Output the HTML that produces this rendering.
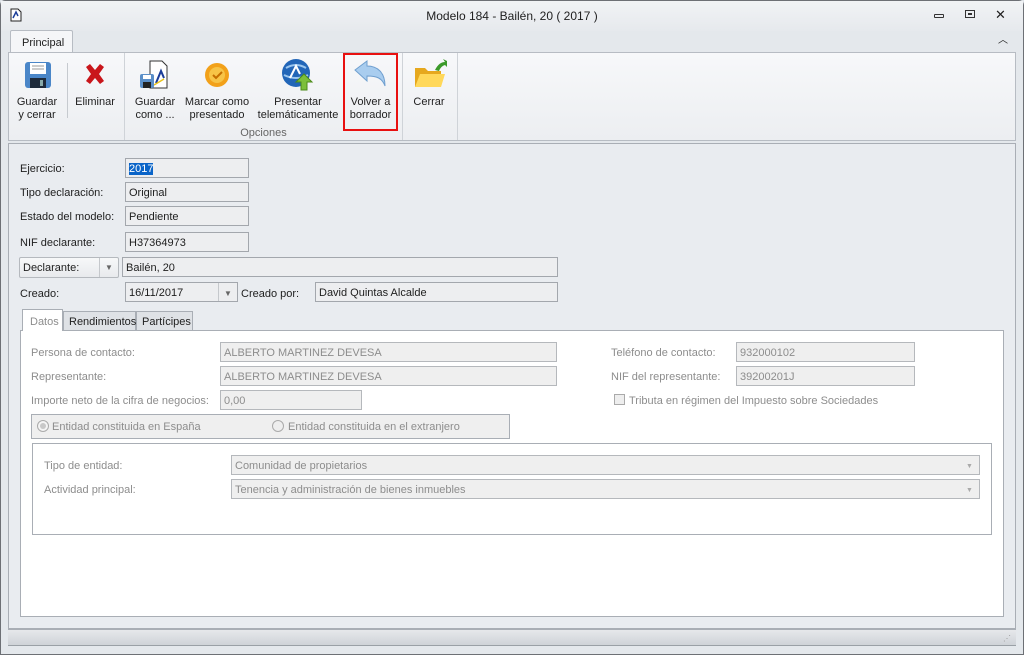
<!DOCTYPE html>
<html><head><meta charset="utf-8"><style>
*{box-sizing:border-box;margin:0;padding:0}
body{width:1024px;height:655px;background:#dfe3e8;font-family:"Liberation Sans",sans-serif;font-size:11px;color:#1e1e1e;position:relative;overflow:hidden}
.a{position:absolute}
.in{position:absolute;border:1px solid #a3a7ad;background:#edeef0;height:20px;padding:3px 3px 0;line-height:14px;white-space:nowrap}
.lb{position:absolute;line-height:14px;white-space:nowrap}
.g{color:#8d8d8d}
.dis{position:absolute;border:1px solid #b5b8bc;background:#efefef;height:20px;padding:3px 3px 0;line-height:14px;color:#8d8d8d;white-space:nowrap}
.btn{position:absolute;text-align:center;line-height:13px;color:#222}
.sep{position:absolute;width:1px;background:#cfd3d8}
</style></head><body>
<div class="a" style="left:0;top:0;width:1024px;height:655px;border:1px solid #6d7075;border-radius:5px 5px 0 0;background:#e4e8ec"></div>
<div class="a" style="left:1px;top:1px;width:1022px;height:30px;background:linear-gradient(#f1f3f5,#e6e9ed)"></div>
<svg class="a" style="left:10px;top:8px" width="12" height="14"><path d="M1 1h7l3 3v9H1z" fill="#fff" stroke="#222"/><path d="M3 10l3-6 2 4" stroke="#1c3f9a" stroke-width="1.5" fill="none"/></svg>
<div class="lb" style="left:0;width:1024px;top:9px;text-align:center;font-size:12px">Modelo 184 - Bailén, 20 ( 2017 )</div>
<div class="a" style="left:934px;top:14px;width:10px;height:4px;border:1px solid #333;border-radius:1px"></div>
<div class="a" style="left:965px;top:10px;width:10px;height:8px;border:1px solid #333"></div>
<div class="a" style="left:968px;top:13px;width:4px;height:2px;border:1px solid #333"></div>
<div class="lb" style="left:995px;top:8px;font-size:13px">✕</div>
<div class="lb" style="left:998px;top:34px;font-size:10px">︿</div>
<div class="a" style="left:10px;top:30px;width:63px;height:23px;border:1px solid #b7bcc3;border-bottom:none;background:#f5f6f8;border-radius:2px 2px 0 0"></div>
<div class="lb" style="left:22px;top:36px">Principal</div>
<div class="a" style="left:8px;top:52px;width:1008px;height:89px;border:1px solid #b7bcc3;background:linear-gradient(#f7f8fa,#eceef1)"></div>
<div class="sep" style="left:124px;top:53px;height:87px"></div>
<div class="sep" style="left:402px;top:53px;height:87px"></div>
<div class="sep" style="left:457px;top:53px;height:87px"></div>
<div class="sep" style="left:67px;top:63px;height:55px;background:#c6cacf"></div>
<svg class="a" style="left:24px;top:61px" width="28" height="28"><rect x="1" y="1" width="26" height="26" rx="3" fill="#4a86c8"/><rect x="6" y="2" width="16" height="11" fill="#fff"/><path d="M8 5h12M8 8h12" stroke="#999"/><rect x="6" y="17" width="16" height="10" fill="#1d2a3a"/><rect x="16" y="19" width="3" height="6" fill="#8aa"/></svg>
<svg class="a" style="left:83px;top:62px" width="24" height="24"><path d="M3 5l4-3 5 6 5-6 4 3-5 7 5 7-4 3-5-6-5 6-4-3 5-7z" fill="#c9161b"/></svg>
<svg class="a" style="left:138px;top:59px" width="32" height="32"><path d="M12 2h12l5 5v22H12z" fill="#fff" stroke="#333"/><path d="M18 24l5-12 3 7" stroke="#1a3c99" stroke-width="2" fill="none"/><path d="M16 26l10-6" stroke="#e8c21a" stroke-width="1.5"/><rect x="2" y="15" width="14" height="14" rx="2" fill="#5b8fc8"/><rect x="5" y="23" width="8" height="6" fill="#222"/><rect x="5" y="16" width="8" height="4" fill="#fff"/></svg>
<svg class="a" style="left:203px;top:61px" width="28" height="28"><circle cx="14" cy="14" r="12" fill="#f2a11a"/><circle cx="14" cy="14" r="8" fill="#f7c447"/><path d="M10 14l3 3 6-6" stroke="#c56e00" stroke-width="2" fill="none"/></svg>
<svg class="a" style="left:281px;top:58px" width="34" height="34"><circle cx="15" cy="15" r="14" fill="#2266b8"/><path d="M5 10q10-6 20 0M3 17q12 6 24 0" stroke="#9cc7ef" fill="none" stroke-width="2"/><path d="M9 20l6-12 4 8" stroke="#fff" stroke-width="2" fill="none"/><path d="M23 16l8 8h-5v8h-6v-8h-5z" fill="#7cbf3a" stroke="#4c8a1a"/></svg>
<svg class="a" style="left:353px;top:60px" width="34" height="28"><path d="M2 10l12-9v5c10 0 18 6 18 20-3-8-8-10-18-10v5z" fill="#a9cdef" stroke="#6f9fcf"/></svg>
<svg class="a" style="left:413px;top:58px" width="34" height="32"><path d="M2 10h10l3 3h13v16H2z" fill="#e6a81e"/><path d="M2 29l5-13h25l-4 13z" fill="#ffd85a"/><path d="M22 12q4-8 10-8l-2-3 4 2v6l-2-2q-4 1-6 6z" fill="#3b9a2a"/></svg>
<div class="btn" style="left:12px;top:96px;width:50px">Guardar<br>y cerrar</div>
<div class="btn" style="left:72px;top:96px;width:46px">Eliminar</div>
<div class="btn" style="left:130px;top:96px;width:50px">Guardar<br>como ...</div>
<div class="btn" style="left:182px;top:96px;width:70px">Marcar como<br>presentado</div>
<div class="btn" style="left:255px;top:96px;width:86px">Presentar<br>telemáticamente</div>
<div class="a" style="left:343px;top:53px;width:55px;height:78px;border:2px solid #e81010"></div>
<div class="btn" style="left:343px;top:96px;width:55px">Volver a<br>borrador</div>
<div class="btn" style="left:405px;top:96px;width:48px">Cerrar</div>
<div class="lb" style="left:124px;top:126px;width:279px;text-align:center;color:#666">Opciones</div>
<div class="a" style="left:8px;top:143px;width:1008px;height:486px;border:1px solid #a9aeb5;background:#e9ecf0"></div>
<div class="lb" style="left:20px;top:162px">Ejercicio:</div>
<div class="in" style="left:125px;top:158px;width:124px"><span style="background:#0a64c8;color:#fff">2017</span></div>
<div class="lb" style="left:20px;top:186px">Tipo declaración:</div>
<div class="in" style="left:125px;top:182px;width:124px">Original</div>
<div class="lb" style="left:20px;top:210px">Estado del modelo:</div>
<div class="in" style="left:125px;top:206px;width:124px">Pendiente</div>
<div class="lb" style="left:20px;top:236px">NIF declarante:</div>
<div class="in" style="left:125px;top:232px;width:124px">H37364973</div>
<div class="a" style="left:19px;top:257px;width:100px;height:21px;border:1px solid #b5b9be;border-radius:2px;background:linear-gradient(#f7f8f9,#e8eaed)"></div>
<div class="a" style="left:99px;top:258px;width:1px;height:19px;background:#c5c8cc"></div>
<div class="lb" style="left:23px;top:261px">Declarante:</div>
<div class="lb" style="left:105px;top:261px;font-size:8px;color:#666">▼</div>
<div class="in" style="left:122px;top:257px;width:436px">Bailén, 20</div>
<div class="lb" style="left:20px;top:287px">Creado:</div>
<div class="in" style="left:125px;top:282px;width:113px">16/11/2017</div>
<div class="a" style="left:218px;top:283px;width:1px;height:18px;background:#c5c8cc"></div>
<div class="lb" style="left:224px;top:287px;font-size:8px;color:#666">▼</div>
<div class="lb" style="left:241px;top:287px">Creado por:</div>
<div class="in" style="left:315px;top:282px;width:243px">David Quintas Alcalde</div>
<div class="a" style="left:20px;top:330px;width:984px;height:287px;border:1px solid #a9aeb5;background:#fff"></div>
<div class="a" style="left:22px;top:309px;width:41px;height:22px;border:1px solid #a9aeb5;border-bottom:none;background:#fff"></div>
<div class="lb g" style="left:30px;top:315px">Datos</div>
<div class="a" style="left:63px;top:311px;width:73px;height:20px;border:1px solid #a9aeb5;background:#dfe2e6"></div>
<div class="lb" style="left:69px;top:315px">Rendimientos</div>
<div class="a" style="left:136px;top:311px;width:57px;height:20px;border:1px solid #a9aeb5;background:#dfe2e6"></div>
<div class="lb" style="left:142px;top:315px">Partícipes</div>
<div class="lb g" style="left:31px;top:346px">Persona de contacto:</div>
<div class="dis" style="left:220px;top:342px;width:337px">ALBERTO MARTINEZ DEVESA</div>
<div class="lb g" style="left:31px;top:370px">Representante:</div>
<div class="dis" style="left:220px;top:366px;width:337px">ALBERTO MARTINEZ DEVESA</div>
<div class="lb g" style="left:31px;top:394px">Importe neto de la cifra de negocios:</div>
<div class="dis" style="left:220px;top:390px;width:142px">0,00</div>
<div class="lb g" style="left:611px;top:346px">Teléfono de contacto:</div>
<div class="dis" style="left:736px;top:342px;width:179px">932000102</div>
<div class="lb g" style="left:611px;top:370px">NIF del representante:</div>
<div class="dis" style="left:736px;top:366px;width:179px">39200201J</div>
<div class="a" style="left:614px;top:394px;width:11px;height:11px;border:1px solid #aaa;background:#eee"></div>
<div class="lb g" style="left:629px;top:394px">Tributa en régimen del Impuesto sobre Sociedades</div>
<div class="a" style="left:31px;top:414px;width:479px;height:25px;border:1px solid #a9aeb5;background:#efefef"></div>
<div class="a" style="left:37px;top:420px;width:12px;height:12px;border:1px solid #aaa;border-radius:50%;background:#f4f4f4"></div>
<div class="a" style="left:40px;top:423px;width:6px;height:6px;border-radius:50%;background:#c8c8c8"></div>
<div class="lb g" style="left:52px;top:420px">Entidad constituida en España</div>
<div class="a" style="left:272px;top:420px;width:12px;height:12px;border:1px solid #aaa;border-radius:50%;background:#eee"></div>
<div class="lb g" style="left:288px;top:420px">Entidad constituida en el extranjero</div>
<div class="a" style="left:32px;top:443px;width:960px;height:92px;border:1px solid #a9aeb5;background:#fff"></div>
<div class="lb g" style="left:44px;top:459px">Tipo de entidad:</div>
<div class="dis" style="left:231px;top:455px;width:749px">Comunidad de propietarios</div>
<div class="lb" style="left:966px;top:460px;font-size:7px;color:#aaa">▼</div>
<div class="lb g" style="left:44px;top:483px">Actividad principal:</div>
<div class="dis" style="left:231px;top:479px;width:749px">Tenencia y administración de bienes inmuebles</div>
<div class="lb" style="left:966px;top:484px;font-size:7px;color:#aaa">▼</div>
<div class="a" style="left:8px;top:629px;width:1008px;height:17px;border-top:1px solid #a9aeb5;border-bottom:1px solid #9aa0a6;background:linear-gradient(#e6e8eb,#cfd3d8)"></div>
<div class="lb" style="left:1003px;top:632px;font-size:8px;color:#999;letter-spacing:-1px">⋰</div>
</body></html>
